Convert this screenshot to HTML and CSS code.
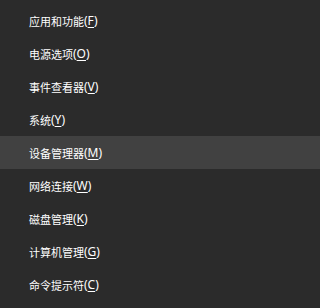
FILE: index.html
```html
<!DOCTYPE html>
<html lang="zh-CN">
<head>
<meta charset="utf-8">
<link rel="stylesheet" href="styles.css">
</head>
<body>
<ul class="menu">
  <li class="item">应用和功能<span class="key">(<u>F</u>)</span></li>
  <li class="item">电源选项<span class="key">(<u>O</u>)</span></li>
  <li class="item">事件查看器<span class="key">(<u>V</u>)</span></li>
  <li class="item">系统<span class="key">(<u>Y</u>)</span></li>
  <li class="item active">设备管理器<span class="key">(<u>M</u>)</span></li>
  <li class="item">网络连接<span class="key">(<u>W</u>)</span></li>
  <li class="item">磁盘管理<span class="key">(<u>K</u>)</span></li>
  <li class="item">计算机管理<span class="key">(<u>G</u>)</span></li>
  <li class="item">命令提示符<span class="key">(<u>C</u>)</span></li>
</ul>
</body>
</html>
```

FILE: styles.css
```css
html, body {
  margin: 0;
  padding: 0;
  background: #2b2b2b;
  height: 100%;
}
.menu {
  list-style: none;
  margin: 0;
  padding: 4px 0 0 0;
  display: flex;
  flex-direction: column;
}
.item {
  height: 33px;
  display: flex;
  align-items: center;
  padding-left: 29px;
  color: #ffffff;
  font-family: "Noto Sans CJK SC", "Noto Sans", sans-serif;
  font-size: 11px;
  white-space: nowrap;
}
.item.active {
  background: #414141;
}
.key {
  font-family: "Noto Sans", "Noto Sans CJK SC", sans-serif;
  font-size: 12px;
}
.key u {
  text-underline-offset: 2px;
  text-decoration-thickness: 1px;
}
```
